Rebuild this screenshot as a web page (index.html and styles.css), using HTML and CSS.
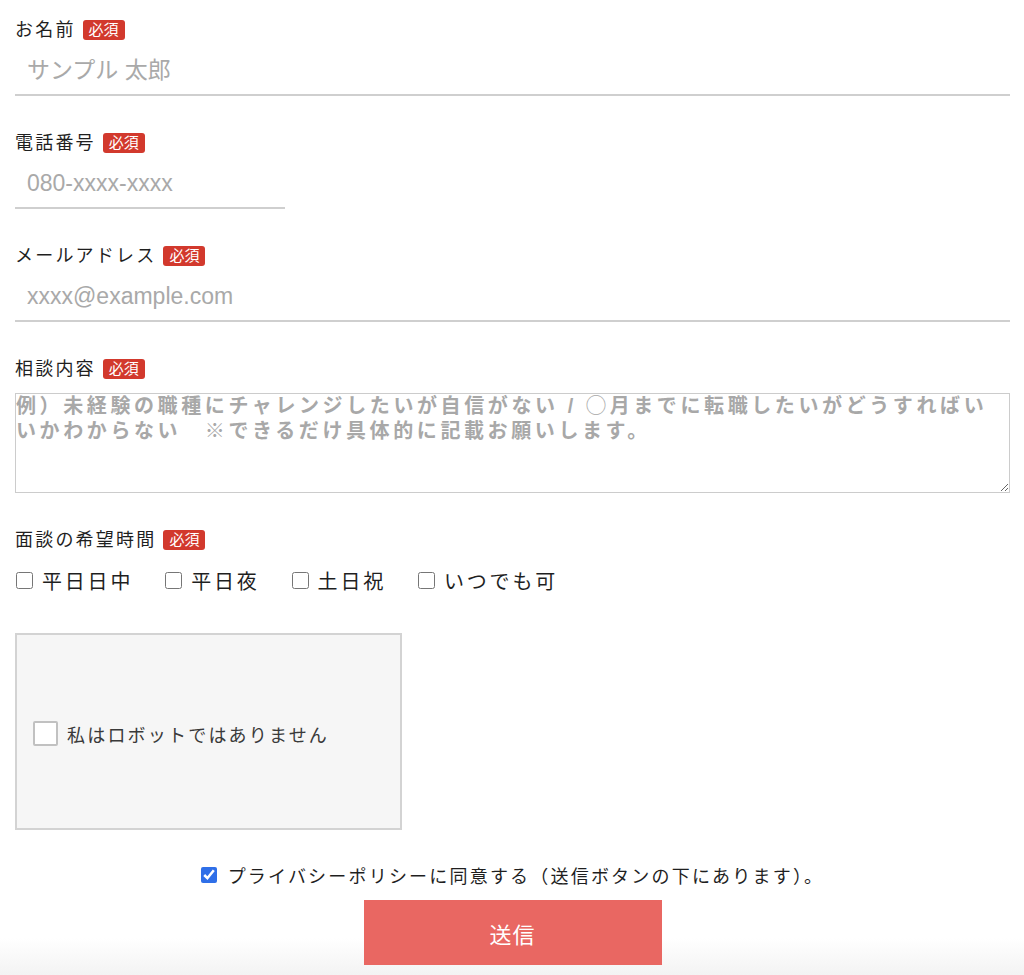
FILE: index.html
```html
<!DOCTYPE html>
<html lang="ja">
<head>
<meta charset="utf-8">
<title>お問い合わせ</title>
<link rel="stylesheet" href="styles.css">
</head>
<body>
<form class="form">
  <div class="field">
    <div class="label-row"><span class="label">お名前</span><span class="badge">必須</span></div>
    <input class="line-input" type="text" placeholder="サンプル 太郎">
  </div>
  <div class="field">
    <div class="label-row"><span class="label">電話番号</span><span class="badge">必須</span></div>
    <input class="line-input short" type="tel" placeholder="080-xxxx-xxxx">
  </div>
  <div class="field">
    <div class="label-row"><span class="label">メールアドレス</span><span class="badge">必須</span></div>
    <input class="line-input" type="email" placeholder="xxxx@example.com">
  </div>
  <div class="field">
    <div class="label-row"><span class="label">相談内容</span><span class="badge">必須</span></div>
    <textarea class="area" placeholder="例）未経験の職種にチャレンジしたいが自信がない / ◯月までに転職したいがどうすればい&#10;いかわからない　※できるだけ具体的に記載お願いします。"></textarea>
  </div>
  <div class="field last">
    <div class="label-row"><span class="label">面談の希望時間</span><span class="badge">必須</span></div>
    <div class="options">
      <label class="option"><input type="checkbox" class="box"><span>平日日中</span></label>
      <label class="option"><input type="checkbox" class="box"><span>平日夜</span></label>
      <label class="option"><input type="checkbox" class="box"><span>土日祝</span></label>
      <label class="option"><input type="checkbox" class="box"><span>いつでも可</span></label>
    </div>
  </div>
  <div class="captcha">
    <span class="captcha-box"></span>
    <span class="captcha-text">私はロボットではありません</span>
  </div>
  <label class="privacy"><input type="checkbox" class="agree" checked><span>プライバシーポリシーに同意する（送信ボタンの下にあります）。</span></label>
  <div class="actions"><button type="button" class="submit">送信</button></div>
</form>
</body>
</html>
```
FILE: styles.css
```css
html {
  min-height: 100%;
  background: linear-gradient(to bottom, #ffffff 938px, #f3f3f3 975px) no-repeat;
  background-color: #f3f3f3;
}
body {
  margin: 0;
  padding: 18px 14px 10px 15px;
  font-family: "Liberation Serif", "Noto Sans CJK JP", serif;
  color: #1f1f1f;
}
.form {
  display: flex;
  flex-direction: column;
}
.field {
  display: flex;
  flex-direction: column;
  margin-bottom: 35px;
}
.field.last {
  margin-bottom: 0;
}
.label-row {
  display: flex;
  align-items: center;
  gap: 7px;
  height: 24px;
}
.label {
  font-size: 18px;
  letter-spacing: 2.2px;
  line-height: 24px;
}
.badge {
  display: inline-flex;
  align-items: center;
  justify-content: center;
  height: 20px;
  padding: 0 6px;
  background: #d2392d;
  color: #fff;
  font-size: 15px;
  border-radius: 3px;
  line-height: 20px;
}
.line-input {
  box-sizing: border-box;
  margin-top: 4px;
  height: 50px;
  width: 100%;
  border: 0;
  border-bottom: 2px solid #cfcfcf;
  padding: 0 12px;
  font-family: "Liberation Sans", "Noto Sans CJK JP", sans-serif;
  font-size: 23px;
  color: #333;
  background: transparent;
  outline: none;
}
.line-input.short {
  width: 270px;
}
.line-input::placeholder {
  color: #a9a9a9;
}
.area {
  box-sizing: border-box;
  margin-top: 12px;
  width: 100%;
  height: 100px;
  border: 1px solid #cccccc;
  padding: 0;
  font-family: "Liberation Sans", "Noto Sans CJK JP", sans-serif;
  font-size: 20px;
  font-weight: 600;
  letter-spacing: 3.6px;
  line-height: 25px;
  resize: both;
  outline: none;
}
.area::placeholder {
  color: #a8a8a8;
}
.options {
  display: flex;
  align-items: center;
  gap: 31px;
  margin-top: 14px;
  height: 28px;
}
.option {
  display: flex;
  align-items: center;
  gap: 9px;
  font-size: 20px;
  letter-spacing: 2.8px;
}
.box {
  width: 17px;
  height: 17px;
  margin: 0 0 0 1px;
}
.captcha {
  box-sizing: border-box;
  margin-top: 39px;
  width: 387px;
  height: 197px;
  background: #f6f6f6;
  border: 2px solid #d3d3d3;
  display: flex;
  align-items: center;
  gap: 9px;
  padding: 4px 0 0 16px;
}
.captcha-box {
  box-sizing: border-box;
  width: 25px;
  height: 25px;
  background: #fff;
  border: 2px solid #c1c1c1;
  border-radius: 2px;
}
.captcha-text {
  font-size: 18px;
  letter-spacing: 2.2px;
  color: #3a3a3a;
}
.privacy {
  margin-top: 33px;
  height: 24px;
  display: flex;
  align-items: center;
  justify-content: center;
  gap: 11px;
  font-size: 18px;
  letter-spacing: 2.2px;
}
.agree {
  width: 16px;
  height: 16px;
  margin: 0;
  accent-color: #2f6fe8;
}
.actions {
  display: flex;
  justify-content: center;
  margin-top: 13px;
}
.submit {
  width: 298px;
  height: 65px;
  border: 0;
  background: #e96762;
  color: #fff;
  font-family: "Liberation Serif", "Noto Sans CJK JP", serif;
  font-size: 22px;
  letter-spacing: 1px;
  cursor: pointer;
}
```
